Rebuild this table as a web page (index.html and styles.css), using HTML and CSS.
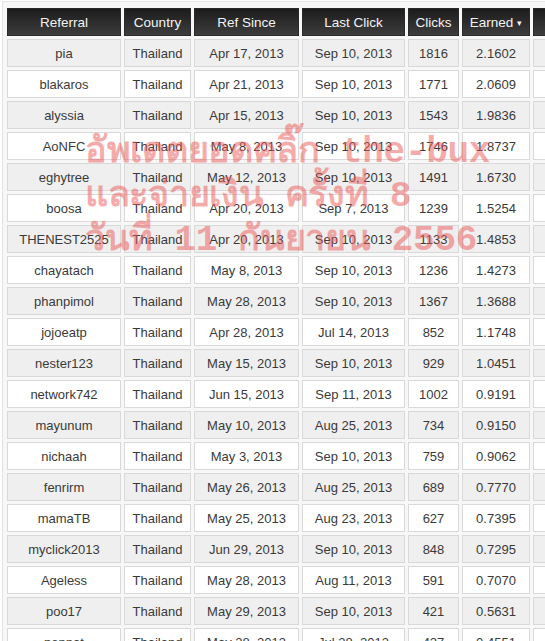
FILE: index.html
```html
<!DOCTYPE html>
<html lang="th">
<head>
<meta charset="utf-8">
<title>Referrals</title>
<link rel="stylesheet" href="styles.css">
</head>
<body>
<div class="page">
  <div class="wrap">
    <table class="refs">
      <colgroup>
        <col class="c-ref"><col class="c-country"><col class="c-since"><col class="c-last"><col class="c-clicks"><col class="c-earned"><col class="c-extra">
      </colgroup>
      <thead>
        <tr><th>Referral</th><th>Country</th><th>Ref Since</th><th>Last Click</th><th>Clicks</th><th>Earned <span class="arrow">&#9662;</span></th><th></th></tr>
      </thead>
      <tbody>
        <tr><td>pia</td><td>Thailand</td><td>Apr 17, 2013</td><td>Sep 10, 2013</td><td>1816</td><td>2.1602</td><td></td></tr>
        <tr><td>blakaros</td><td>Thailand</td><td>Apr 21, 2013</td><td>Sep 10, 2013</td><td>1771</td><td>2.0609</td><td></td></tr>
        <tr><td>alyssia</td><td>Thailand</td><td>Apr 15, 2013</td><td>Sep 10, 2013</td><td>1543</td><td>1.9836</td><td></td></tr>
        <tr><td>AoNFC</td><td>Thailand</td><td>May 8, 2013</td><td>Sep 10, 2013</td><td>1746</td><td>1.8737</td><td></td></tr>
        <tr><td>eghytree</td><td>Thailand</td><td>May 12, 2013</td><td>Sep 10, 2013</td><td>1491</td><td>1.6730</td><td></td></tr>
        <tr><td>boosa</td><td>Thailand</td><td>Apr 20, 2013</td><td>Sep 7, 2013</td><td>1239</td><td>1.5254</td><td></td></tr>
        <tr><td>THENEST2525</td><td>Thailand</td><td>Apr 20, 2013</td><td>Sep 10, 2013</td><td>1133</td><td>1.4853</td><td></td></tr>
        <tr><td>chayatach</td><td>Thailand</td><td>May 8, 2013</td><td>Sep 10, 2013</td><td>1236</td><td>1.4273</td><td></td></tr>
        <tr><td>phanpimol</td><td>Thailand</td><td>May 28, 2013</td><td>Sep 10, 2013</td><td>1367</td><td>1.3688</td><td></td></tr>
        <tr><td>jojoeatp</td><td>Thailand</td><td>Apr 28, 2013</td><td>Jul 14, 2013</td><td>852</td><td>1.1748</td><td></td></tr>
        <tr><td>nester123</td><td>Thailand</td><td>May 15, 2013</td><td>Sep 10, 2013</td><td>929</td><td>1.0451</td><td></td></tr>
        <tr><td>network742</td><td>Thailand</td><td>Jun 15, 2013</td><td>Sep 11, 2013</td><td>1002</td><td>0.9191</td><td></td></tr>
        <tr><td>mayunum</td><td>Thailand</td><td>May 10, 2013</td><td>Aug 25, 2013</td><td>734</td><td>0.9150</td><td></td></tr>
        <tr><td>nichaah</td><td>Thailand</td><td>May 3, 2013</td><td>Sep 10, 2013</td><td>759</td><td>0.9062</td><td></td></tr>
        <tr><td>fenrirm</td><td>Thailand</td><td>May 26, 2013</td><td>Aug 25, 2013</td><td>689</td><td>0.7770</td><td></td></tr>
        <tr><td>mamaTB</td><td>Thailand</td><td>May 25, 2013</td><td>Aug 23, 2013</td><td>627</td><td>0.7395</td><td></td></tr>
        <tr><td>myclick2013</td><td>Thailand</td><td>Jun 29, 2013</td><td>Sep 10, 2013</td><td>848</td><td>0.7295</td><td></td></tr>
        <tr><td>Ageless</td><td>Thailand</td><td>May 28, 2013</td><td>Aug 11, 2013</td><td>591</td><td>0.7070</td><td></td></tr>
        <tr><td>poo17</td><td>Thailand</td><td>May 29, 2013</td><td>Sep 10, 2013</td><td>421</td><td>0.5631</td><td></td></tr>
        <tr><td>pennat</td><td>Thailand</td><td>May 28, 2013</td><td>Jul 28, 2013</td><td>427</td><td>0.4551</td><td></td></tr>
      </tbody>
    </table>
  </div>
  <div class="stamp">
    <div class="stamp-line">อัพเดตยอดคลิ๊ก the-bux</div>
    <div class="stamp-line">และจ่ายเงิน ครั้งที่ 8</div>
    <div class="stamp-line">วันที่ 11 กันยายน 2556</div>
  </div>
</div>
</body>
</html>
```

FILE: styles.css
```css
html, body {
  margin: 0;
  padding: 0;
  overflow: hidden;
  background: #ffffff;
}

.page {
  position: relative;
  width: 545px;
  height: 641px;
  overflow: hidden;
}

.wrap {
  margin: 1px 0 0 2px;
  padding: 3px 0 0 1px;
  border-top: 1px solid #e4e4e4;
  border-left: 1px solid #e4e4e4;
  background: #f7f7f7;
  width: 620px;
}

.refs {
  table-layout: fixed;
  border-collapse: separate;
  border-spacing: 3px;
  width: 612px;
  font-family: "Liberation Sans", Arial, sans-serif;
  font-size: 13px;
  color: #3a3a3a;
}

.c-ref { width: 114px; }
.c-country { width: 67px; }
.c-since { width: 105px; }
.c-last { width: 103px; }
.c-clicks { width: 51px; }
.c-earned { width: 68px; }
.c-extra { width: 80px; }

.refs th,
.refs td {
  box-sizing: border-box;
  height: 28px;
  padding: 0 2px;
  text-align: center;
  white-space: nowrap;
  overflow: hidden;
}

.refs th {
  font-weight: normal;
  font-size: 13.5px;
  color: #f4f4f4;
  background: linear-gradient(#1c1c1c, #3d3d3d);
  border: 1px solid #2a2a2a;
}

.arrow {
  font-size: 9px;
  vertical-align: 1px;
}

.refs td {
  border: 1px solid #d9d9d9;
  background: #ffffff;
}

.refs tbody tr:nth-child(odd) td {
  background: #efefef;
}

.stamp {
  position: absolute;
  left: 85px;
  top: 131px;
  font-family: "Liberation Mono", "Courier New", monospace;
  font-weight: bold;
  font-size: 36px;
  line-height: 44px;
  letter-spacing: -0.3px;
  color: rgba(238, 88, 88, 0.5);
  white-space: nowrap;
  pointer-events: none;
}
```
